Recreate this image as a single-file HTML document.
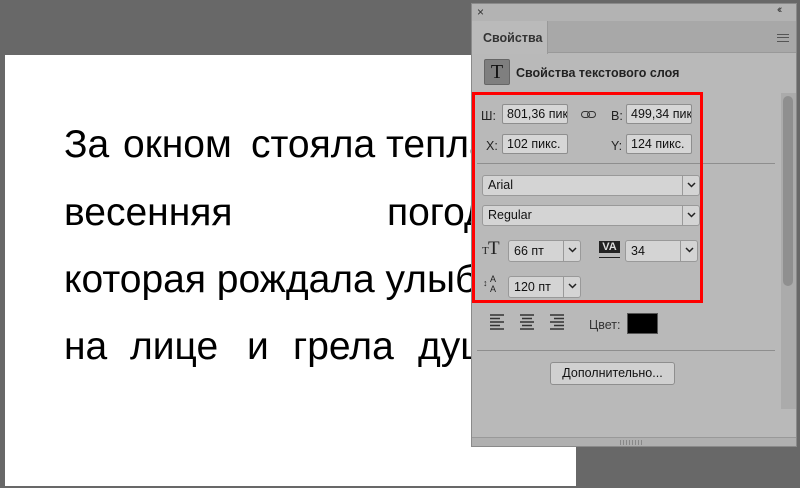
<!DOCTYPE html>
<html><head><meta charset="utf-8"><style>
*{margin:0;padding:0;box-sizing:border-box}
body{width:800px;height:488px;background:#686868;position:relative;overflow:hidden;font-family:"Liberation Sans",Arial,sans-serif}
.a{position:absolute}
.canvas{left:5px;top:55px;width:571px;height:431px;background:#fff}
.w{position:absolute;font-size:39px;color:#000;line-height:1;white-space:nowrap}
.panel{left:471px;top:3px;width:326px;height:444px;background:#b9b9b9;border:1px solid #8a8a8a;overflow:hidden}
.inp{position:absolute;background:#d6d6d6;border:1px solid #8e8e8e;border-radius:2px;font-size:12.5px;color:#111;padding-left:4px;line-height:18px;overflow:hidden;white-space:nowrap}
.lbl{position:absolute;font-size:12.5px;color:#222}
.dd{position:absolute;background:#d4d4d4;border:1px solid #999;border-radius:3px;font-size:12.5px;color:#111;padding-left:5px;line-height:19px}
.dd .ar{position:absolute;right:0;top:0;width:17px;height:100%;border-left:1px solid #999;}
.ar svg{position:absolute;left:4px;top:6px}
.sep{position:absolute;height:1px;background:#8e8e8e}
</style></head><body>
<div class="a canvas"></div>
<div class="w" style="left:64px;top:125px">За</div>
<div class="w" style="left:123px;top:125px">окном</div>
<div class="w" style="left:251px;top:125px">стояла</div>
<div class="w" style="left:386px;top:125px">теплая</div>
<div class="w" style="left:64px;top:193px">весенняя</div>
<div class="w" style="left:387px;top:193px">погода,</div>
<div class="w" style="left:64px;top:260px">которая рождала улыбку</div>
<div class="w" style="left:64px;top:327px">на</div>
<div class="w" style="left:130px;top:327px">лице</div>
<div class="w" style="left:247px;top:327px">и</div>
<div class="w" style="left:293px;top:327px">грела</div>
<div class="w" style="left:418px;top:327px">душу.</div>

<div class="a panel">
 <div class="a" style="left:0;top:0;width:326px;height:17px;background:#b3b3b3"></div>
 <div class="a" style="left:5px;top:1px;font-size:12px;color:#333">×</div>
 <div class="a" style="left:305px;top:0px;font-size:11px;color:#333;letter-spacing:-2px">‹‹</div>
 <div class="a" style="left:0;top:17px;width:326px;height:32px;background:#a8a8a8;border-bottom:1px solid #999"></div>
 <div class="a" style="left:0;top:17px;width:76px;height:33px;background:#bababa;border-right:1px solid #999"></div>
 <div class="a" style="left:11px;top:27px;font-size:12.5px;font-weight:bold;color:#333">Свойства</div>
 <div class="a" style="left:305px;top:30px;width:12px;height:8px;border-top:1px solid #555;border-bottom:1px solid #555"></div>
 <div class="a" style="left:305px;top:33px;width:12px;height:1px;background:#555"></div>
 <div class="a" style="left:12px;top:55px;width:26px;height:26px;background:#7f7f7f;border:1px solid #666;border-radius:2px;font-family:'Liberation Serif',serif;font-size:20px;text-align:center;line-height:24px;color:#111">T</div>
 <div class="a" style="left:44px;top:62px;font-size:12.5px;font-weight:bold;color:#222">Свойства текстового слоя</div>
 <div class="a" style="left:309px;top:89px;width:16px;height:316px;background:#ababab"></div>
 <div class="a" style="left:311px;top:92px;width:10px;height:190px;background:#8f8f8f;border-radius:5px"></div>

 <div class="lbl" style="left:9px;top:105px">Ш:</div>
 <div class="inp" style="left:30px;top:100px;width:66px;height:20px">801,36 пикс.</div>
 <div class="a" style="left:109px;top:107px;width:9px;height:7px;border:1.5px solid #333;border-radius:4px"></div>
 <div class="a" style="left:115px;top:107px;width:9px;height:7px;border:1.5px solid #333;border-radius:4px"></div>
 <div class="lbl" style="left:139px;top:105px">В:</div>
 <div class="inp" style="left:154px;top:100px;width:66px;height:20px">499,34 пикс.</div>
 <div class="lbl" style="left:14px;top:135px">X:</div>
 <div class="inp" style="left:30px;top:130px;width:66px;height:20px">102 пикс.</div>
 <div class="lbl" style="left:139px;top:135px">Y:</div>
 <div class="inp" style="left:154px;top:130px;width:66px;height:20px">124 пикс.</div>
 <div class="sep" style="left:5px;top:159px;width:298px"></div>

 <div class="dd" style="left:10px;top:171px;width:218px;height:21px">Arial<div class="ar"><svg width="9" height="6"><path d="M1 1L4.5 4.5L8 1" stroke="#222" stroke-width="1.5" fill="none"/></svg></div></div>
 <div class="dd" style="left:10px;top:201px;width:218px;height:21px">Regular<div class="ar"><svg width="9" height="6"><path d="M1 1L4.5 4.5L8 1" stroke="#222" stroke-width="1.5" fill="none"/></svg></div></div>

 <div class="a" style="left:10px;top:241px;font-family:'Liberation Serif',serif;font-size:11px;color:#222">T</div>
 <div class="a" style="left:16px;top:234px;font-family:'Liberation Serif',serif;font-size:19px;color:#222">T</div>
 <div class="dd" style="left:36px;top:236px;width:73px;height:22px;line-height:20px">66 пт<div class="ar"><svg width="9" height="6"><path d="M1 1L4.5 4.5L8 1" stroke="#222" stroke-width="1.5" fill="none"/></svg></div></div>
 <div class="a" style="left:127px;top:237px;width:21px;height:12px;background:#222;color:#ddd;font-size:11px;font-weight:bold;line-height:12px;text-align:center">VA</div>
 <div class="a" style="left:127px;top:253px;width:21px;height:1px;background:#222"></div>
 <div class="dd" style="left:153px;top:236px;width:73px;height:22px;line-height:20px">34<div class="ar"><svg width="9" height="6"><path d="M1 1L4.5 4.5L8 1" stroke="#222" stroke-width="1.5" fill="none"/></svg></div></div>

 <div class="a" style="left:11px;top:275px;font-size:9px;color:#222;line-height:9px">↕</div>
 <div class="a" style="left:18px;top:270px;font-size:9px;color:#222;line-height:10px">A<br>A</div>
 <div class="dd" style="left:36px;top:272px;width:73px;height:22px;line-height:20px">120 пт<div class="ar"><svg width="9" height="6"><path d="M1 1L4.5 4.5L8 1" stroke="#222" stroke-width="1.5" fill="none"/></svg></div></div>

 <div class="a" style="left:0;top:88px;width:231px;height:211px;border:3px solid #f00"></div>

 <svg class="a" style="left:17px;top:310px" width="100" height="16">
  <g stroke="#333" stroke-width="1.5">
   <path d="M1 1H15M1 4.5H11M1 8H15M1 11.5H11M1 15H15"/>
   <path d="M31 1H45M33 4.5H43M31 8H45M33 11.5H43M31 15H45"/>
   <path d="M61 1H75M65 4.5H75M61 8H75M65 11.5H75M61 15H75"/>
  </g>
 </svg>
 <div class="lbl" style="left:117px;top:314px;color:#333">Цвет:</div>
 <div class="a" style="left:155px;top:309px;width:31px;height:21px;background:#000;border:1px solid #555"></div>
 <div class="sep" style="left:5px;top:346px;width:298px"></div>
 <div class="a" style="left:78px;top:358px;width:125px;height:23px;background:#d0d0d0;border:1px solid #8e8e8e;border-radius:3px;font-size:12.5px;text-align:center;line-height:21px;color:#111">Дополнительно...</div>
 <div class="a" style="left:0;top:433px;width:326px;height:11px;background:#b0b0b0;border-top:1px solid #999"></div>
 <div class="a" style="left:148px;top:436px;width:22px;height:5px;background:repeating-linear-gradient(90deg,#888 0 1px,transparent 1px 3px)"></div>
</div>
</body></html>
